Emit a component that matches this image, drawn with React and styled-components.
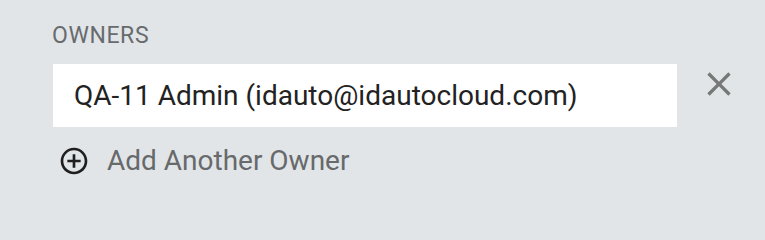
import React from 'react';
import styled, { createGlobalStyle } from 'styled-components';

const GlobalStyle = createGlobalStyle`
  html, body {
    margin: 0;
    padding: 0;
    background: #e1e5e8;
    font-family: Roboto, "Liberation Sans", sans-serif;
  }
`;

const Panel = styled.div`
  width: 765px;
  height: 212px;
  box-sizing: border-box;
  padding: 24px 0 0 52px;
  background: #e1e5e8;
`;

const Label = styled.div`
  font-size: 23px;
  line-height: 24px;
  letter-spacing: 0.6px;
  color: #686b6e;
  text-transform: uppercase;
  margin-bottom: 16px;
`;

const OwnerRow = styled.div`
  display: flex;
  align-items: flex-start;
`;

const OwnerField = styled.div`
  width: 624px;
  height: 63px;
  box-sizing: border-box;
  margin-left: 1px;
  padding: 0 21px;
  background: #fff;
  display: flex;
  align-items: center;
  font-size: 28px;
  color: #222;
`;

const IconButton = styled.button`
  border: none;
  background: none;
  padding: 0;
  margin-left: 22px;
  width: 40px;
  height: 40px;
  display: flex;
  align-items: center;
  justify-content: center;
  color: #777;
  cursor: pointer;
`;

const AddRow = styled.button`
  display: flex;
  align-items: center;
  gap: 17px;
  border: none;
  background: none;
  padding: 0;
  margin: 18px 0 0 6px;
  font-family: inherit;
  font-size: 28px;
  line-height: 32px;
  color: #67696b;
  cursor: pointer;
`;

const CloseIcon = () => (
  <svg width="40" height="40" viewBox="0 0 24 24" fill="currentColor">
    <path d="M19 6.41L17.59 5 12 10.59 6.41 5 5 6.41 10.59 12 5 17.59 6.41 19 12 13.41 17.59 19 19 17.59 13.41 12z" />
  </svg>
);

const AddCircleIcon = () => (
  <svg width="32" height="32" viewBox="0 0 24 24" fill="#1f1f1f">
    <path d="M13 7h-2v4H7v2h4v4h2v-4h4v-2h-4V7zm-1-5C6.48 2 2 6.48 2 12s4.48 10 10 10 10-4.48 10-10S17.52 2 12 2zm0 18c-4.41 0-8-3.59-8-8s3.59-8 8-8 8 3.59 8 8-3.59 8-8 8z" />
  </svg>
);

export default function App() {
  return (
    <>
      <GlobalStyle />
      <Panel>
        <Label>Owners</Label>
        <OwnerRow>
          <OwnerField>QA-11 Admin (idauto@idautocloud.com)</OwnerField>
          <IconButton aria-label="Remove owner">
            <CloseIcon />
          </IconButton>
        </OwnerRow>
        <AddRow>
          <AddCircleIcon />
          Add Another Owner
        </AddRow>
      </Panel>
    </>
  );
}
